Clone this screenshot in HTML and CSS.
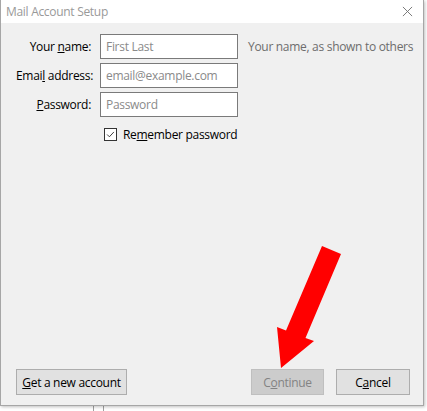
FILE: index.html
```html
<!DOCTYPE html>
<html lang="en">
<head>
    <meta charset="UTF-8">
    <title>Mail Account Setup</title>
    <link rel="stylesheet" href="styles.css">
</head>
<body>
    <div class="dialog">
        <div class="titlebar">
            <span class="title">Mail Account Setup</span>
            <svg class="close" viewBox="0 0 12 12" fill="none" stroke="currentColor" stroke-width="1">
                <line x1="1" y1="1" x2="11" y2="11"></line>
                <line x1="11" y1="1" x2="1" y2="11"></line>
            </svg>
        </div>

        <div class="dialog-body">
            <div class="form">
                <label class="field-label">Your <u>n</u>ame:</label>
                <input class="field" type="text" placeholder="First Last">
                <span class="hint">Your name, as shown to others</span>

                <label class="field-label">Emai<u>l</u> address:</label>
                <input class="field" type="text" placeholder="email@example.com">
                <span></span>

                <label class="field-label"><u>P</u>assword:</label>
                <input class="field" type="password" placeholder="Password">
                <span></span>
            </div>

            <label class="remember">
                <span class="checkbox">
                    <svg viewBox="0 0 13 13" fill="none" stroke="#333" stroke-width="1.1">
                        <polyline points="2.5 6.5 5.2 9.2 10.5 3.5"></polyline>
                    </svg>
                </span>
                <span>Re<u>m</u>ember password</span>
            </label>

            <div class="actions">
                <button class="btn btn-wide"><u>G</u>et a new account</button>
                <div class="actions-right">
                    <button class="btn btn-disabled">C<u>o</u>ntinue</button>
                    <button class="btn">C<u>a</u>ncel</button>
                </div>
            </div>
        </div>
    </div>

    <!-- window behind the dialog -->
    <div class="behind">
        <span class="behind-frame"></span>
        <span class="behind-text">Connection Security:</span>
    </div>

    <!-- annotation arrow -->
    <svg class="arrow" viewBox="0 0 427 411">
        <polygon points="322,246 341,254 305.5,338 314,341 281,368 277,327 286,330.5" fill="#ff0000"></polygon>
    </svg>
</body>
</html>
```

FILE: styles.css
```css
:root {
    --dialog-bg: #f0f0f0;
    --border: #a6a6a6;
    --text: #000000;
    --text-muted: #6d6d6d;
    --field-border: #7a7a7a;
}

* {
    margin: 0;
    padding: 0;
    box-sizing: border-box;
}

body {
    width: 427px;
    height: 411px;
    overflow: hidden;
    background: #ffffff;
    font-family: 'Open Sans', 'Noto Sans', sans-serif;
    font-size: 12px;
    letter-spacing: -0.3px;
    color: var(--text);
}

.dialog {
    position: relative;
    z-index: 1;
    width: 424px;
    height: 406px;
    display: flex;
    flex-direction: column;
    background: var(--dialog-bg);
    border: 1px solid var(--border);
    border-top: none;
    box-shadow: 1px 1px 3px rgba(0, 0, 0, 0.25);
}

.titlebar {
    height: 23px;
    background: #ffffff;
    display: flex;
    align-items: center;
    justify-content: space-between;
    padding: 0 10px 0 5px;
}

.title {
    color: #999999;
    font-size: 12px;
}

.close {
    width: 11px;
    height: 11px;
    color: #707070;
}

.dialog-body {
    flex: 1;
    display: flex;
    flex-direction: column;
    padding: 11px 13px 10px 15px;
}

.form {
    display: grid;
    grid-template-columns: 75px 138px auto;
    column-gap: 9px;
    row-gap: 4px;
    align-items: center;
}

.field-label {
    text-align: right;
    white-space: nowrap;
}

.field {
    height: 25px;
    width: 138px;
    border: 1px solid var(--field-border);
    background: #ffffff;
    padding: 0 5px;
    font: inherit;
    letter-spacing: inherit;
    outline: none;
}

.field::placeholder {
    color: #8a8a8a;
}

.hint {
    color: var(--text-muted);
    white-space: nowrap;
    padding-left: 1px;
}

.remember {
    display: flex;
    align-items: center;
    gap: 6px;
    margin: 9px 0 0 88px;
}

.checkbox {
    width: 13px;
    height: 13px;
    border: 1px solid #333333;
    background: #ffffff;
    display: flex;
}

.checkbox svg {
    width: 11px;
    height: 11px;
}

.actions {
    margin-top: auto;
    display: flex;
    justify-content: space-between;
    align-items: center;
}

.actions-right {
    display: flex;
    gap: 12px;
}

.btn {
    width: 74px;
    height: 26px;
    font: inherit;
    letter-spacing: inherit;
    color: var(--text);
    background: #e1e1e1;
    border: 1px solid #adadad;
}

.btn-wide {
    width: 111px;
}

.btn-disabled {
    width: 73px;
    background: #cccccc;
    border-color: #bfbfbf;
    color: #838383;
}

.behind {
    position: relative;
    height: 20px;
    margin-top: -2px;
}

.behind-frame {
    position: absolute;
    left: 93px;
    top: 0;
    width: 11px;
    height: 20px;
    border-left: 1px solid #a0a0a0;
    border-right: 1px solid #a0a0a0;
}

.behind-text {
    position: absolute;
    left: 127px;
    top: 2px;
    font-size: 14px;
    color: #1a1a1a;
}

.arrow {
    position: absolute;
    left: 0;
    top: 0;
    width: 427px;
    height: 411px;
    z-index: 2;
    pointer-events: none;
}
```
